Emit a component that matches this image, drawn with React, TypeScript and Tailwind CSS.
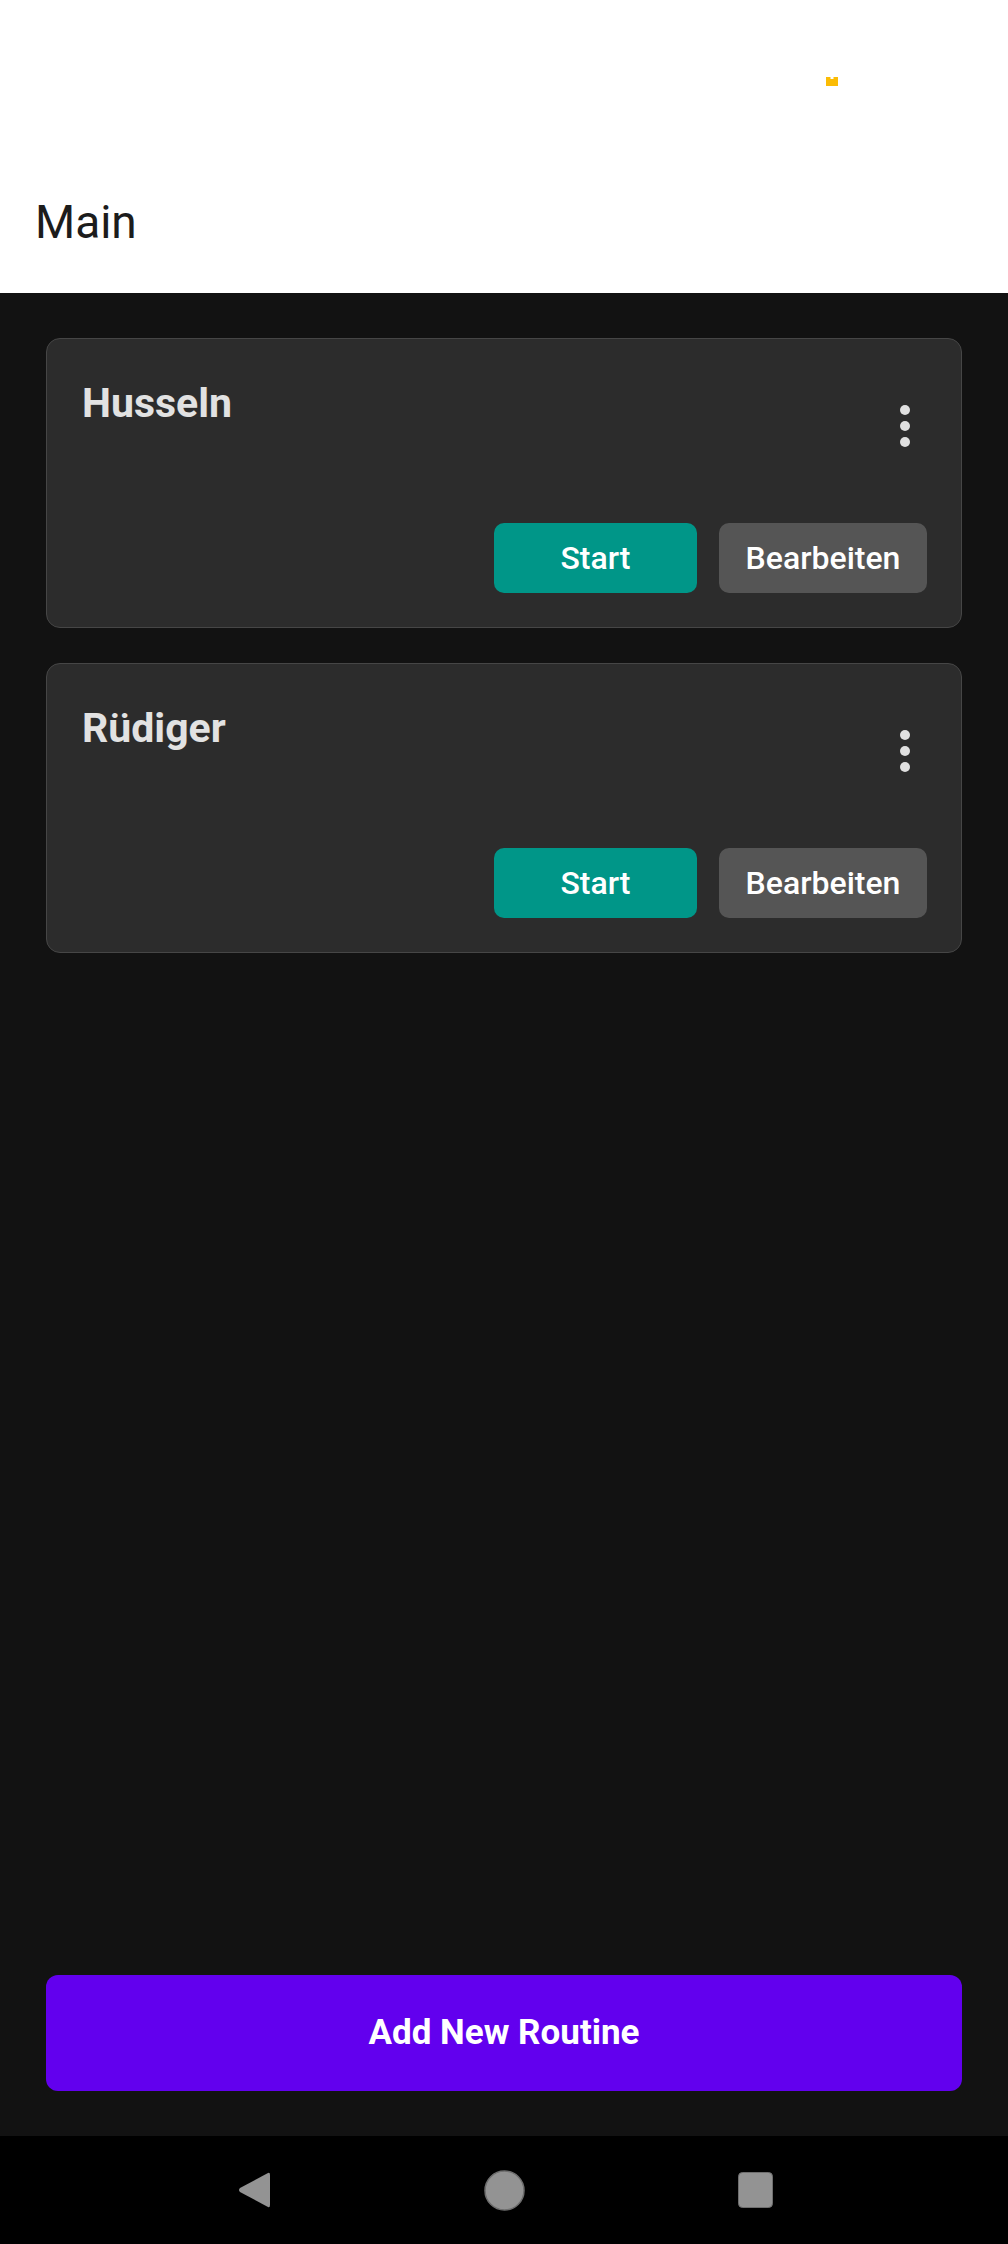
const routines = ["Husseln", "Rüdiger"];

const RoutineCard = ({ name }: { name: string }) => {
  return (
    <div className="rounded-[14px] border border-[#464646] bg-[#2c2c2c] pt-[44px] pb-[34px] pl-[35px] pr-[34px]">
      <div className="flex flex-row items-start justify-between">
        <h2 className="text-[41px] leading-none font-bold text-[#e2e2e2]">{name}</h2>
        <div className="mt-[22px] mr-[17px] flex flex-col items-center gap-[6px]">
          <span className="w-[10px] h-[10px] rounded-full bg-[#e0e0e0]" />
          <span className="w-[10px] h-[10px] rounded-full bg-[#e0e0e0]" />
          <span className="w-[10px] h-[10px] rounded-full bg-[#e0e0e0]" />
        </div>
      </div>
      <div className="mt-[76px] flex flex-row justify-end gap-[22px]">
        <button className="w-[203px] h-[70px] rounded-[10px] bg-[#009688] text-white text-[32px] font-medium flex items-center justify-center">
          Start
        </button>
        <button className="w-[208px] h-[70px] rounded-[10px] bg-[#555555] text-white text-[32px] font-medium flex items-center justify-center">
          Bearbeiten
        </button>
      </div>
    </div>
  );
};

export default function App() {
  return (
    <div className="w-full h-[2244px] flex flex-col bg-[#121212] font-['Roboto',sans-serif]">
      {/* app bar */}
      <header className="h-[293px] shrink-0 bg-white flex flex-col">
        <div className="mt-[77px] pl-[826px] h-[9px] flex">
          <svg width="12" height="9" viewBox="0 0 12 9">
            <path d="M0 0 H4.5 V2 H7.5 V0 H12 V9 H0 Z" fill="#fbbc05" />
          </svg>
        </div>
        <h1 className="mt-[113px] pl-[35px] text-[46px] leading-none text-[#1c1c1c]">Main</h1>
      </header>

      <main className="flex-1 flex flex-col px-[46px] pt-[45px] pb-[45px]">
        <div className="flex flex-col gap-[35px]">
          {routines.map((r) => (
            <RoutineCard key={r} name={r} />
          ))}
        </div>
        <div className="flex-1" />
        <button className="w-full h-[116px] rounded-[12px] bg-[#6200ee] text-white text-[35px] font-bold flex items-center justify-center">
          Add New Routine
        </button>
      </main>

      {/* system nav */}
      <nav className="h-[108px] shrink-0 bg-black flex flex-row items-center justify-center gap-[213px] pl-[2px]">
        <svg width="34" height="38" viewBox="0 0 34 38">
          <path d="M31 2 Q33 1 33 4 V34 Q33 37 31 36 L3 21 Q1 19 3 17 Z" fill="#939393" />
        </svg>
        <svg width="41" height="41" viewBox="0 0 41 41">
          <circle cx="20.5" cy="20.5" r="19.5" fill="#939393" stroke="#6e6e6e" strokeWidth="1.5" />
        </svg>
        <svg width="35" height="36" viewBox="0 0 35 36">
          <rect x="0.5" y="0.5" width="34" height="35" rx="4" fill="#939393" stroke="#6e6e6e" strokeWidth="1" />
        </svg>
      </nav>
    </div>
  );
}
